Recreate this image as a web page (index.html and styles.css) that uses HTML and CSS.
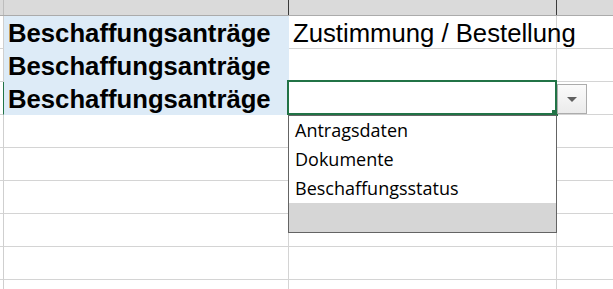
FILE: index.html
```html
<!DOCTYPE html>
<html lang="de">
<head>
<meta charset="utf-8">
<title>Tabelle</title>
<link rel="stylesheet" href="styles.css">
</head>
<body>
<div class="sheet">
  <div class="row head">
    <div class="cell rh"></div>
    <div class="cell ca"></div>
    <div class="cell cb"></div>
    <div class="cell cc"></div>
  </div>
  <div class="row">
    <div class="cell rh"></div>
    <div class="cell ca fill bold">Beschaffungsanträge</div>
    <div class="cell cb">Zustimmung / Bestellung</div>
    <div class="cell cc"></div>
  </div>
  <div class="row">
    <div class="cell rh"></div>
    <div class="cell ca fill bold">Beschaffungsanträge</div>
    <div class="cell cb"></div>
    <div class="cell cc"></div>
  </div>
  <div class="row">
    <div class="cell rh sel"></div>
    <div class="cell ca fill bold">Beschaffungsanträge</div>
    <div class="cell cb"></div>
    <div class="cell cc"></div>
  </div>
  <div class="row"><div class="cell rh"></div><div class="cell ca"></div><div class="cell cb"></div><div class="cell cc"></div></div>
  <div class="row"><div class="cell rh"></div><div class="cell ca"></div><div class="cell cb"></div><div class="cell cc"></div></div>
  <div class="row"><div class="cell rh"></div><div class="cell ca"></div><div class="cell cb"></div><div class="cell cc"></div></div>
  <div class="row"><div class="cell rh"></div><div class="cell ca"></div><div class="cell cb"></div><div class="cell cc"></div></div>
  <div class="row"><div class="cell rh"></div><div class="cell ca"></div><div class="cell cb"></div><div class="cell cc"></div></div>
  <div class="row short"><div class="cell rh"></div><div class="cell ca"></div><div class="cell cb"></div><div class="cell cc"></div></div>

  <div class="selection"><span class="handle"></span></div>
  <div class="ddbtn"><span class="tri"></span></div>
  <ul class="list">
    <li class="item">Antragsdaten</li>
    <li class="item">Dokumente</li>
    <li class="item">Beschaffungsstatus</li>
    <li class="filler"></li>
  </ul>
</div>
</body>
</html>
```

FILE: styles.css
```css
html, body {
  margin: 0;
  padding: 0;
  background: #ffffff;
}
body {
  width: 613px;
  height: 289px;
  overflow: hidden;
}
.sheet {
  position: relative;
  width: 613px;
  height: 289px;
  overflow: hidden;
  font-family: "Liberation Sans", Arial, sans-serif;
  color: #000;
}
.row {
  display: flex;
  height: 33px;
  box-sizing: border-box;
}
.row.short {
  height: 9px;
  overflow: hidden;
}
.row.head {
  height: 16px;
  background: #dadada;
  border-bottom: 1px solid #ababab;
}
.cell {
  box-sizing: border-box;
  height: 33px;
  border-bottom: 1px solid #d4d4d4;
  border-right: 1px solid #d4d4d4;
  font-size: 25.7px;
  line-height: 30px;
  padding: 2px 0 0 4px;
  white-space: nowrap;
  overflow: visible;
}
.head .cell {
  height: 15px;
  border-bottom: none;
  padding: 0;
}
.rh { width: 4px; padding: 0; border-right-color: #cfcfcf; }
.rh.sel { border-right: 1px solid #217346; width: 4px; }
.head .rh { border-right-color: #bdbdbd; }
.ca { width: 285px; }
.cb { width: 268px; }
.cc { flex: 1; border-right: none; }
.head .ca, .head .cb { border-right: 1px solid #3a3a3a; }
.fill {
  background: #ddebf7;
  border-bottom-color: #ddebf7;
  border-right-color: #ddebf7;
}
.bold { font-weight: bold; }

.selection {
  position: absolute;
  left: 287px;
  top: 80px;
  width: 270px;
  height: 35px;
  box-sizing: border-box;
  border: 2px solid #217346;
}
.handle {
  position: absolute;
  right: -3px;
  bottom: -3px;
  width: 6px;
  height: 6px;
  background: #217346;
}
.ddbtn {
  position: absolute;
  left: 557px;
  top: 84px;
  width: 30px;
  height: 30px;
  box-sizing: border-box;
  border: 1px solid #acacac;
  background: linear-gradient(#fbfbfb, #ebebeb);
  display: flex;
  align-items: center;
  justify-content: center;
}
.tri {
  width: 0;
  height: 0;
  border-left: 5px solid transparent;
  border-right: 5px solid transparent;
  border-top: 5px solid #606060;
}
.list {
  position: absolute;
  left: 288px;
  top: 115px;
  width: 269px;
  height: 118px;
  box-sizing: border-box;
  margin: 0;
  padding: 0;
  list-style: none;
  border: 1px solid #646464;
  background: #fff;
  display: flex;
  flex-direction: column;
  font-family: "Open Sans", "Noto Sans", sans-serif;
  font-size: 18px;
}
.item {
  height: 29px;
  line-height: 29px;
  padding-left: 6px;
  white-space: nowrap;
}
.filler {
  flex: 1;
  background: #d6d6d6;
}
```
